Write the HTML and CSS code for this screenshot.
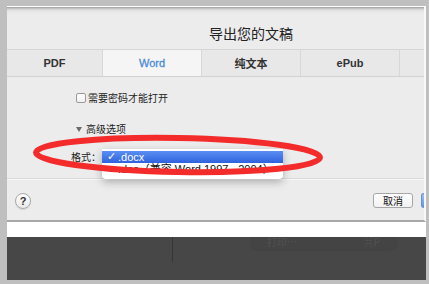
FILE: index.html
```html
<!DOCTYPE html>
<html lang="zh">
<head>
<meta charset="utf-8">
<title>导出您的文稿</title>
<link rel="stylesheet" href="styles.css">
</head>
<body>
<div class="frame">
  <div class="dialog">
    <div class="titlebar">导出您的文稿</div>
    <div class="tabs">
      <div class="tab">PDF</div>
      <div class="tab active">Word</div>
      <div class="tab">纯文本</div>
      <div class="tab">ePub</div>
      <div class="tab"></div>
    </div>
    <div class="content">
      <div class="row check-row"><span class="checkbox"></span><span>需要密码才能打开</span></div>
      <div class="row adv-row"><span class="tri"></span><span>高级选项</span></div>
      <div class="row fmt-row">
        <span class="fmt-label">格式：</span>
        <div class="popup">
          <div class="item selected"><span class="check">✓</span>.docx</div>
          <div class="item">.doc（兼容 Word 1997 - 2004）</div>
        </div>
      </div>
    </div>
    <div class="footer">
      <span class="help">?</span>
      <span class="buttons">
        <span class="btn">取消</span>
        <span class="btn primary"></span>
      </span>
    </div>
  </div>
  <div class="band"></div>
  <div class="dark">
    <div class="dark-left"></div>
    <div class="ghost-menu"><span>打印…</span><span>⌘P</span></div>
  </div>
</div>
<svg class="mark" width="429" height="284" viewBox="0 0 429 284">
  <ellipse cx="178" cy="155" rx="142" ry="17" fill="none" stroke="#f42b2b" stroke-width="6" transform="rotate(1 178 155)"/>
</svg>
</body>
</html>
```

FILE: styles.css
```css
* { box-sizing: border-box; }
html, body { margin: 0; padding: 0; }
body {
  width: 429px;
  height: 284px;
  background: #bfbfbf;
  font-family: "Liberation Sans", "Noto Sans CJK SC", sans-serif;
  font-size: 11px;
  color: #222;
  overflow: hidden;
  position: relative;
}
.frame {
  margin: 6px 0 0 7px;
  width: 419px;
}
.dialog {
  height: 216px;
  background: #ececec;
  border-top: 1px solid #ffffff;
  border-right: 2px solid #f7f7f7;
  border-bottom: 2px solid #a8a8a8;
  display: flex;
  flex-direction: column;
}
.titlebar {
  height: 42px;
  padding: 17px 0 0 202px;
  line-height: 18px;
  font-family: "Noto Sans CJK SC", sans-serif;
  font-size: 14px;
  color: #222;
  background: linear-gradient(#9d9d9d 0, #cfcfcf 2px, #e6e6e6 4px, #ececec 7px);
}
.tabs {
  height: 28px;
  display: grid;
  grid-template-columns: 95px 99px 99px 99px 1fr;
  background: #e8e8e8;
  border-top: 1px solid #d6d6d6;
  border-bottom: 1px solid #d2d2d2;
}
.tab {
  display: flex;
  align-items: center;
  justify-content: center;
  border-left: 1px solid #d8d8d8;
  font-size: 11px;
  font-weight: bold;
  color: #333;
  font-family: "Liberation Sans", "Noto Sans CJK SC", sans-serif;
}
.tab:first-child { border-left: none; }
.tab.active {
  background: #f5f5f5;
  color: #4a8ad6;
  font-weight: normal;
  -webkit-text-stroke: 0.3px #4a8ad6;
}
.content {
  flex: 1;
  padding-top: 14px;
  border-bottom: 1px solid #d9d9d9;
  font-family: "Noto Sans CJK SC", sans-serif;
  font-size: 10px;
}
.row {
  height: 14px;
  display: flex;
  align-items: center;
  line-height: 14px;
}
.check-row { padding-left: 69px; gap: 2px; }
.checkbox {
  width: 10px;
  height: 10px;
  border: 1px solid #9a9a9a;
  border-radius: 2px;
  background: linear-gradient(#ffffff, #f0f0f0);
}
.adv-row { margin-top: 17px; padding-left: 69px; gap: 4px; }
.tri {
  width: 0;
  height: 0;
  border-left: 3.5px solid transparent;
  border-right: 3.5px solid transparent;
  border-top: 5px solid #6b6b6b;
}
.fmt-row { margin-top: 14px; padding-left: 64px; position: relative; }
.popup {
  position: absolute;
  left: 95px;
  top: -1px;
  width: 181px;
  height: 30px;
  background: #ffffff;
  border-radius: 0 0 4px 4px;
  box-shadow: 0 3px 8px rgba(0,0,0,0.28);
  padding-top: 2px;
  font-family: "Liberation Sans", "Noto Sans CJK SC", sans-serif;
  font-size: 11px;
}
.item {
  height: 13px;
  line-height: 13px;
  padding-left: 16px;
  color: #111;
  white-space: nowrap;
  position: relative;
}
.item.selected {
  background: linear-gradient(#5b8ff2, #2e62df);
  color: #fff;
  height: 12px;
  line-height: 12px;
}
.check {
  position: absolute;
  left: 5px;
  top: 0;
  font-size: 11px;
  font-family: "DejaVu Sans", sans-serif;
}
.footer {
  height: 41px;
  display: flex;
  align-items: center;
  justify-content: space-between;
  padding: 1px 0 0 8px;
  border-top: 1px solid #f7f7f7;
}
.help {
  width: 16px;
  height: 16px;
  border-radius: 50%;
  border: 1px solid #a9a9a9;
  background: linear-gradient(#ffffff, #e9e9e9);
  font-family: "Liberation Sans", sans-serif;
  font-weight: bold;
  font-size: 11px;
  line-height: 14px;
  text-align: center;
  color: #333;
  box-shadow: 0 1px 1px rgba(0,0,0,0.1);
}
.buttons { display: flex; gap: 8px; align-items: center; }
.btn {
  width: 40px;
  height: 15px;
  border: 1px solid #a6a6a6;
  border-radius: 3px;
  background: linear-gradient(#ffffff, #f1f1f1);
  font-family: "Noto Sans CJK SC", sans-serif;
  font-size: 10px;
  line-height: 13px;
  text-align: center;
  color: #111;
}
.btn.primary {
  width: 3px;
  border-radius: 3px 0 0 3px;
  border-right: none;
  background: linear-gradient(#9cc2f5, #5b97ea);
  border-color: #6a8fc9;
}
.band { height: 15px; background: #ffffff; }
.dark {
  height: 43px;
  background: #474747;
  position: relative;
}
.dark-left {
  width: 166px;
  height: 25px;
  border-right: 1px solid #363636;
}
.ghost-menu {
  position: absolute;
  left: 244px;
  top: 0;
  width: 145px;
  height: 12px;
  background: #444444;
  border-radius: 0 0 5px 5px;
  box-shadow: 0 1px 3px rgba(0,0,0,0.1);
  display: flex;
  justify-content: space-between;
  padding: 0 16px 0 16px;
  font-family: "Noto Sans CJK SC", sans-serif;
  font-size: 10px;
  line-height: 10px;
  color: #525252;
}
.mark {
  position: absolute;
  left: 0;
  top: 0;
  pointer-events: none;
}
```
